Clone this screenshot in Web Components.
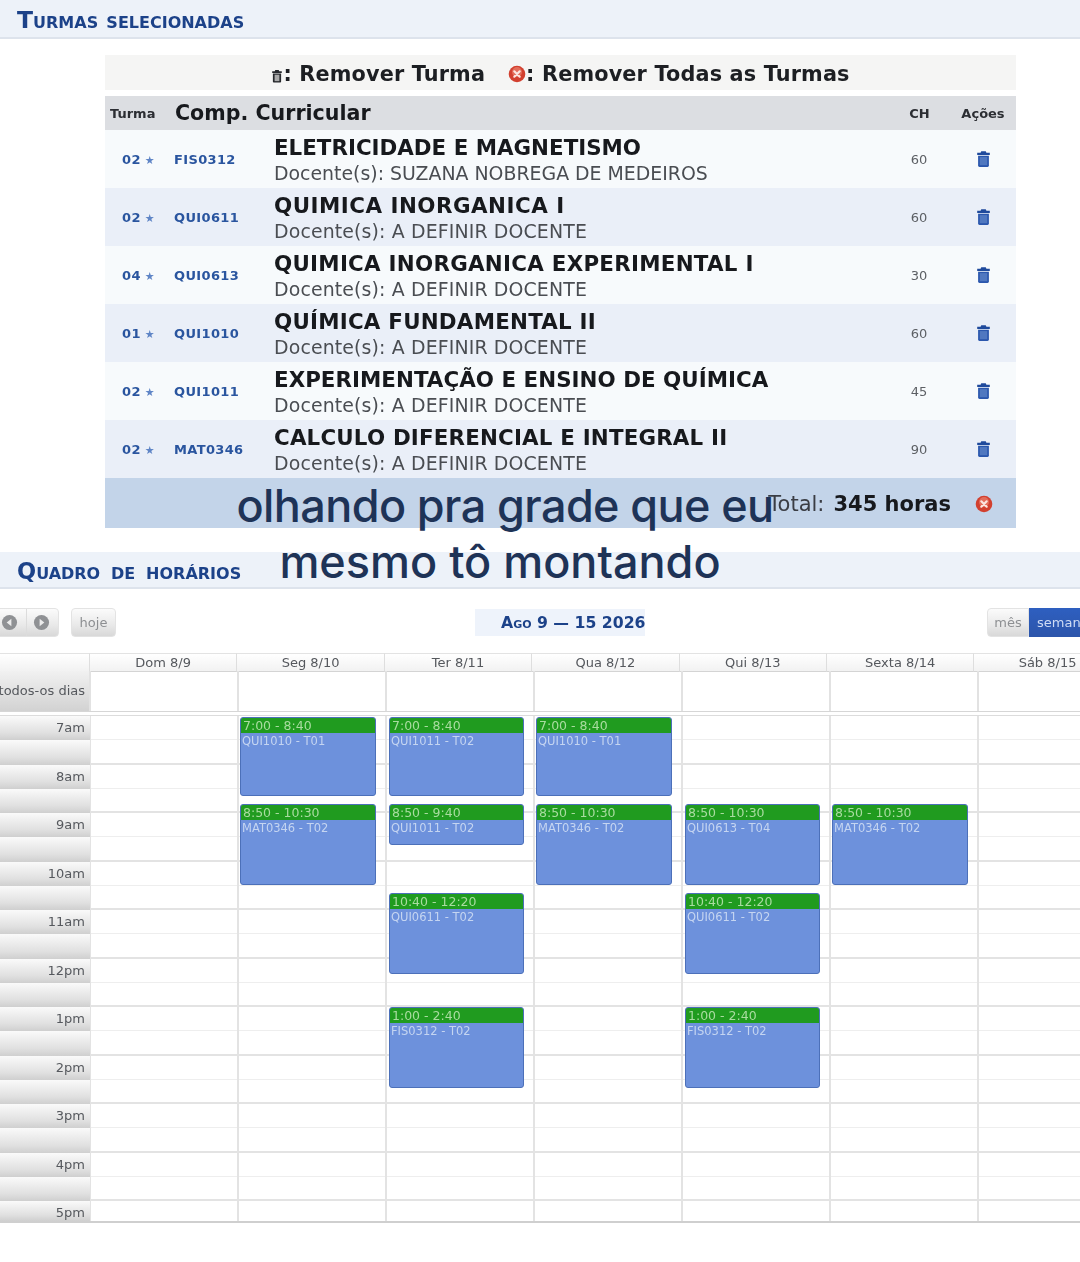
<!DOCTYPE html>
<html lang="pt">
<head>
<meta charset="utf-8">
<title>Turmas selecionadas</title>
<style>
  html, body { margin: 0; padding: 0; background: #fff; }
  body { width: 1080px; height: 1262px; overflow: hidden; position: relative; font-family: "DejaVu Sans", sans-serif; }
</style>
</head>
<body>
<section-bar style="--bar-h:39px;--bar-font:23.500px">Turmas selecionadas</section-bar>
<turmas-table></turmas-table>
<section-bar style="--bar-h:37px;--bar-top:24px;--bar-font:22.500px;--word-gap:3px">Quadro de horários</section-bar>
<cal-toolbar></cal-toolbar>
<week-calendar></week-calendar>
<caption-overlay><span style="display:block">olhando pra grade que eu</span><span style="display:block;letter-spacing:0;margin-left:-10px">mesmo tô montando</span></caption-overlay>

<script>
const TRASH = `<svg viewBox="0 0 14 16" width="17" height="18"><path d="M5 1.2h4l.6 1.3h3v1.900H1.400V2.500h3z" fill="#1f4a9c"/><path d="M2.200 5h9.600v8.800q0 1.200-1.200 1.200H3.400q-1.200 0-1.200-1.200z" fill="#2b57ad"/><rect x="3.700" y="6.300" width="6.600" height="7.200" fill="#5078c0"/></svg>`;
const REDX = (s) => `<svg viewBox="0 0 18 18" width="${s}" height="${s}"><circle cx="9" cy="9" r="8.300" fill="#d2402f"/><circle cx="9" cy="7" r="5" fill="#ee8b78" opacity=".6"/><path d="M6.300 6.300l5.400 5.400M11.700 6.300l-5.400 5.400" stroke="#fbe6e0" stroke-width="2.200" stroke-linecap="round"/></svg>`;

class SectionBar extends HTMLElement {
  constructor() {
    super();
    this.attachShadow({ mode: "open" }).innerHTML = `
      <style>
        :host {
          display: flex; align-items: center; box-sizing: border-box;
          height: var(--bar-h, 38px); margin-top: var(--bar-top, 0);
          padding: 2px 0 0 17px;
          background: #edf2f9; border-bottom: 2px solid #dde3ec;
          color: #1c4289; font: bold var(--bar-font, 23px) "DejaVu Sans", sans-serif;
          font-variant: small-caps; word-spacing: var(--word-gap, 0);
          filter: blur(.4px);
        }
      </style>
      <slot></slot>`;
  }
}
customElements.define("section-bar", SectionBar);

class TurmaRow extends HTMLElement {
  constructor() {
    super();
    this.attachShadow({ mode: "open" }).innerHTML = `
      <style>
        :host {
          display: grid; grid-template-columns: 69px 100px 1fr 62px 66px;
          height: 58px; align-items: center; background: #f7fafc;
        }
        :host([alt]) { background: #eaeff8; }
        .num { padding-left: 17px; color: #2a559f; font: bold 13px "DejaVu Sans", sans-serif; letter-spacing: .4px; white-space: nowrap; }
        .num i { font-style: normal; color: #5f85c6; font-size: 11px; margin-left: -1px; }
        .cod { color: #2a559f; font: bold 13px "DejaVu Sans", sans-serif; letter-spacing: .35px; }
        .txt { line-height: 24px; padding-top: 1px; }
        .nome { color: #17191d; font: bold 21.400px/28px "DejaVu Sans", sans-serif; height: 28px; white-space: nowrap; }
        .doc { color: #4a4d52; font: 18.900px/22px "DejaVu Sans", sans-serif; height: 23px; white-space: nowrap; }
        .ch { color: #5c5f64; font: 13px "DejaVu Sans", sans-serif; text-align: center; }
        .acao { display: flex; justify-content: center; }
      </style>
      <div class="num"><span id="n"></span> <i>★</i></div>
      <div class="cod" id="c"></div>
      <div class="txt"><div class="nome" id="t"></div><div class="doc" id="d"></div></div>
      <div class="ch" id="h"></div>
      <div class="acao">${TRASH}</div>`;
  }
  connectedCallback() {
    const s = this.shadowRoot;
    s.getElementById("n").textContent = this.getAttribute("turma");
    s.getElementById("c").textContent = this.getAttribute("codigo");
    s.getElementById("t").textContent = this.getAttribute("nome");
    s.getElementById("t").style.letterSpacing = this.getAttribute("ajuste") + "px";
    s.getElementById("d").textContent = "Docente(s): " + this.getAttribute("docente");
    s.getElementById("d").style.letterSpacing = this.getAttribute("docente")[0] == "A" ? ".14px" : "0";
    s.getElementById("h").textContent = this.getAttribute("ch");
  }
}
customElements.define("turma-row", TurmaRow);

class TurmasTable extends HTMLElement {
  constructor() {
    super();
    const dados = [
      ["02", "FIS0312", "ELETRICIDADE E MAGNETISMO", "SUZANA NOBREGA DE MEDEIROS", "60", 0],
      ["02", "QUI0611", "QUIMICA INORGANICA I", "A DEFINIR DOCENTE", "60", 0.5],
      ["04", "QUI0613", "QUIMICA INORGANICA EXPERIMENTAL I", "A DEFINIR DOCENTE", "30", 0.27],
      ["01", "QUI1010", "QUÍMICA FUNDAMENTAL II", "A DEFINIR DOCENTE", "60", 0.23],
      ["02", "QUI1011", "EXPERIMENTAÇÃO E ENSINO DE QUÍMICA", "A DEFINIR DOCENTE", "45", 0.03],
      ["02", "MAT0346", "CALCULO DIFERENCIAL E INTEGRAL II", "A DEFINIR DOCENTE", "90", 0.18],
    ];
    const linhas = dados.map((d, i) => `<turma-row ${i % 2 ? "alt" : ""} turma="${d[0]}" codigo="${d[1]}" nome="${d[2]}" docente="${d[3]}" ch="${d[4]}" ajuste="${d[5]}"></turma-row>`).join("");
    this.attachShadow({ mode: "open" }).innerHTML = `
      <style>
        :host { display: block; width: 911px; margin: 16px 0 0 105px; font-family: "DejaVu Sans", sans-serif; filter: blur(.4px); }
        .legenda {
          box-sizing: border-box; height: 35px; padding-top: 3px;
          display: flex; align-items: center; justify-content: center;
          background: #f5f5f4; color: #1d1f23; font-size: 20.800px; font-weight: bold;
          letter-spacing: .15px;
        }
        .legenda svg { flex: none; }
        .legenda .sp { width: 23px; }
        .legenda span { white-space: pre; }
        .cab {
          margin-top: 6px; height: 34px; display: grid; grid-template-columns: 70px 1fr 61px 66px;
          align-items: center; background: #dcdee2; color: #2c2e33;
        }
        .cab .t { padding-left: 5px; font: bold 13px "DejaVu Sans", sans-serif; }
        .cab .c { color: #17191d; font: bold 20.600px "DejaVu Sans", sans-serif; }
        .cab .h { font: bold 13px "DejaVu Sans", sans-serif; text-align: center; }
        .cab .a { font: bold 13px "DejaVu Sans", sans-serif; text-align: center; }
        .total {
          box-sizing: border-box; height: 50px; padding: 2px 23px 0 0;
          display: flex; align-items: center; justify-content: flex-end;
          background: #c3d4e9; color: #17191d; font-size: 21px;
        }
        .total span { color: #3a3d44; margin-right: 9px; }
        .total b { margin-right: 24px; }
      </style>
      <div class="legenda">
        <svg viewBox="0 0 14 16" width="12" height="14" style="margin-top:4px"><path d="M5 1h4l.6 1.500h3v1.900H1.400V2.500h3z" fill="#26282c"/><path d="M2.200 5h9.600v9.500q0 1-1 1H3.200q-1 0-1-1z" fill="#26282c"/><rect x="4.200" y="6.500" width="5.600" height="7.500" fill="#a8a8a8"/></svg>
        <span>: Remover Turma</span><span class="sp"></span>${REDX(18)}<span>: Remover Todas as Turmas</span>
      </div>
      <div class="cab">
        <div class="t">Turma</div><div class="c">Comp. Curricular</div><div class="h">CH</div><div class="a">Ações</div>
      </div>
      ${linhas}
      <div class="total"><span>Total:</span><b>345 horas</b>${REDX(18)}</div>`;
  }
}
customElements.define("turmas-table", TurmasTable);

class CalToolbar extends HTMLElement {
  constructor() {
    super();
    const seta = (d) => `<svg viewBox="0 0 18 18" width="17" height="17"><circle cx="9" cy="9" r="8" fill="#8f9194"/><path d="${d}" fill="#ececec"/></svg>`;
    this.attachShadow({ mode: "open" }).innerHTML = `
      <style>
        :host {
          display: grid; grid-template-columns: 475px 170px 1fr; align-items: center;
          height: 30px; margin-top: 18px; font-family: "DejaVu Sans", sans-serif;
          filter: blur(.4px);
        }
        .esq { display: flex; gap: 12px; margin-left: -9px; }
        .btn {
          display: flex; align-items: center; justify-content: center; box-sizing: border-box;
          height: 29px; background: linear-gradient(#fbfbfb, #e9e9e9 60%, #d8d8d8);
          border-radius: 4px; border: 1px solid #e3e3e3; color: #8d8f92; font-size: 13px;
        }
        .setas {
          width: 68px; gap: 15px;
          background: linear-gradient(90deg, transparent 34px, #dcdcdc 34px, #dcdcdc 35px, transparent 35px), linear-gradient(#fbfbfb, #e9e9e9 60%, #d8d8d8);
        }
        .hoje { width: 45px; }
        .dir { display: flex; justify-self: end; margin-right: -3px; }
        .mes { width: 42px; border-radius: 4px 0 0 4px; }
        .sem { width: 54px; border-radius: 0; border: 0; background: linear-gradient(#2e5fc0, #2c55aa); color: #cfdcf4; justify-content: flex-start; padding-left: 8px; overflow: hidden; white-space: nowrap; }
        .titulo {
          box-sizing: border-box; background: #eef3fb; color: #1c4289; font: bold 15.700px "DejaVu Sans", sans-serif;
          height: 27px; line-height: 27px; padding-left: 26px; white-space: nowrap;
        }
        .titulo small { font-variant: small-caps; font-size: 15.700px; }
      </style>
      <div class="esq">
        <div class="btn setas">${seta("M11 5v8L6 9z")}${seta("M7 5v8l5-4z")}</div>
        <div class="btn hoje">hoje</div>
      </div>
      <div class="titulo"><small>Ago</small> 9 — 15 2026</div>
      <div class="dir">
        <div class="btn mes">mês</div>
        <div class="btn sem">seman</div>
      </div>`;
  }
}
customElements.define("cal-toolbar", CalToolbar);

class CalEvent extends HTMLElement {
  constructor() {
    super();
    this.attachShadow({ mode: "open" }).innerHTML = `
      <style>
        :host {
          position: absolute; box-sizing: border-box;
          background: #6d91dc; border: 1px solid #4c70b9; border-radius: 3px;
          overflow: hidden; font-family: "DejaVu Sans", sans-serif;
        }
        .hora { height: 15px; line-height: 16px; background: #209b1f; color: #a9dca0; font-size: 12.500px; padding-left: 2px; white-space: nowrap; }
        .tit { color: #c5d5f1; font-size: 11.500px; line-height: 15px; padding: 1px 0 0 1px; white-space: nowrap; }
      </style>
      <div class="hora"><slot name="hora"></slot></div>
      <div class="tit"><slot></slot></div>`;
  }
}
customElements.define("cal-event", CalEvent);

class WeekCalendar extends HTMLElement {
  constructor() {
    super();
    const dias = ["Dom 8/9", "Seg 8/10", "Ter 8/11", "Qua 8/12", "Qui 8/13", "Sexta 8/14", "Sáb 8/15"];
    const horas = ["7am", "8am", "9am", "10am", "11am", "12pm", "1pm", "2pm", "3pm", "4pm", "5pm"];
    // coluna (0 = Dom), topo relativo à grade, altura, hora, título
    const evs = [
      [1, 1, 79, "7:00 - 8:40", "QUI1010 - T01"], [2, 1, 79, "7:00 - 8:40", "QUI1011 - T02"], [3, 1, 79, "7:00 - 8:40", "QUI1010 - T01"],
      [1, 88, 81, "8:50 - 10:30", "MAT0346 - T02"], [2, 88, 41, "8:50 - 9:40", "QUI1011 - T02"], [3, 88, 81, "8:50 - 10:30", "MAT0346 - T02"],
      [4, 88, 81, "8:50 - 10:30", "QUI0613 - T04"], [5, 88, 81, "8:50 - 10:30", "MAT0346 - T02"],
      [2, 177, 81, "10:40 - 12:20", "QUI0611 - T02"], [4, 177, 81, "10:40 - 12:20", "QUI0611 - T02"],
      [2, 291, 81, "1:00 - 2:40", "FIS0312 - T02"], [4, 291, 81, "1:00 - 2:40", "FIS0312 - T02"],
    ];
    const offs = [0, 2, 3, 2, 3, 2];
    const largs = [0, 136, 135, 136, 135, 136];
    const slots = horas.map((h, i) => `
      <div class="slot"><span>${h}</span></div>
      ${i < 10 ? `<div class="slot"></div>` : ""}`).join("");
    const linhas = horas.map((h, i) => `<div class="lin hr"></div>${i < 10 ? `<div class="lin"></div>` : ""}`).join("");
    const colunas = dias.map(() => `<div class="col"></div>`).join("");
    const eventos = evs.map((e) => `<cal-event style="left:${e[0] * 148 + offs[e[0]]}px;top:${e[1]}px;width:${largs[e[0]]}px;height:${e[2]}px"><span slot="hora">${e[3]}</span>${e[4]}</cal-event>`).join("");
    this.attachShadow({ mode: "open" }).innerHTML = `
      <style>
        :host { display: block; width: 1080px; margin-top: 16px; overflow: hidden; color: #55585d; font: 13px "DejaVu Sans", sans-serif; filter: blur(.4px); }
        .cab { display: grid; grid-template-columns: 89px repeat(7, 147.400px); height: 18px; }
        .cab div {
          box-sizing: border-box; text-align: center; line-height: 17px; white-space: nowrap;
          background: linear-gradient(#fff, #f2f2f2); border-top: 1px solid #e3e3e3; border-bottom: 1px solid #d4d4d4; border-left: 1px solid #dedede;
        }
        .cab div:first-child { border-left: 0; }
        .dia { display: grid; grid-template-columns: 89px repeat(7, 148px); height: 40px; border-bottom: 1px solid #d6d6d6; }
        .dia div { border-left: 2px solid #e2e2e2; box-sizing: border-box; }
        .dia .ax {
          border: 0; text-align: right; padding-right: 4px; line-height: 40px; margin-left: -14px; white-space: nowrap;
          background: linear-gradient(#f1f1f1, #d2d2d2);
        }
        .corpo { display: grid; grid-template-columns: 90px 1fr; margin-top: 3px; border-top: 1px solid #dcdcdc; border-bottom: 2px solid #cfcfcf; }
        .eixo .slot {
          box-sizing: border-box; height: 24.250px; text-align: right; padding-right: 5px; line-height: 24px;
          background: linear-gradient(#fafafa, #e0e0e0 70%, #cfcfcf);
        }
        .eixo .slot:last-child { height: 20px; }
        .grade { position: relative; height: 505px; overflow: hidden; }
        .lin { box-sizing: border-box; height: 24.250px; border-bottom: 1px solid #eeeeee; }
        .lin:nth-child(even) { border-bottom: 2px solid #e3e3e3; }
        .cols { position: absolute; inset: 0 0 0 -1px; display: grid; grid-template-columns: repeat(7, 148px); }
        .col { border-left: 2px solid #e3e3e3; box-sizing: border-box; }
      </style>
      <div class="cab"><div></div>${dias.map((d) => `<div>${d}</div>`).join("")}</div>
      <div class="dia"><div class="ax">todos-os dias</div>${dias.map(() => "<div></div>").join("")}</div>
      <div class="corpo">
        <div class="eixo">${slots}</div>
        <div class="grade">
          ${linhas}
          <div class="cols">${colunas}</div>
          ${eventos}
        </div>
      </div>`;
  }
}
customElements.define("week-calendar", WeekCalendar);

class CaptionOverlay extends HTMLElement {
  constructor() {
    super();
    this.attachShadow({ mode: "open" }).innerHTML = `
      <style>
        :host {
          position: absolute; left: 205px; top: 478px; width: 600px; text-align: center;
          color: #1e3357; font: 550 45px/56px Inter, "Liberation Sans", sans-serif; letter-spacing: -.6px;
        }
      </style>
      <slot></slot>`;
  }
}
customElements.define("caption-overlay", CaptionOverlay);
</script>
</body>
</html>
